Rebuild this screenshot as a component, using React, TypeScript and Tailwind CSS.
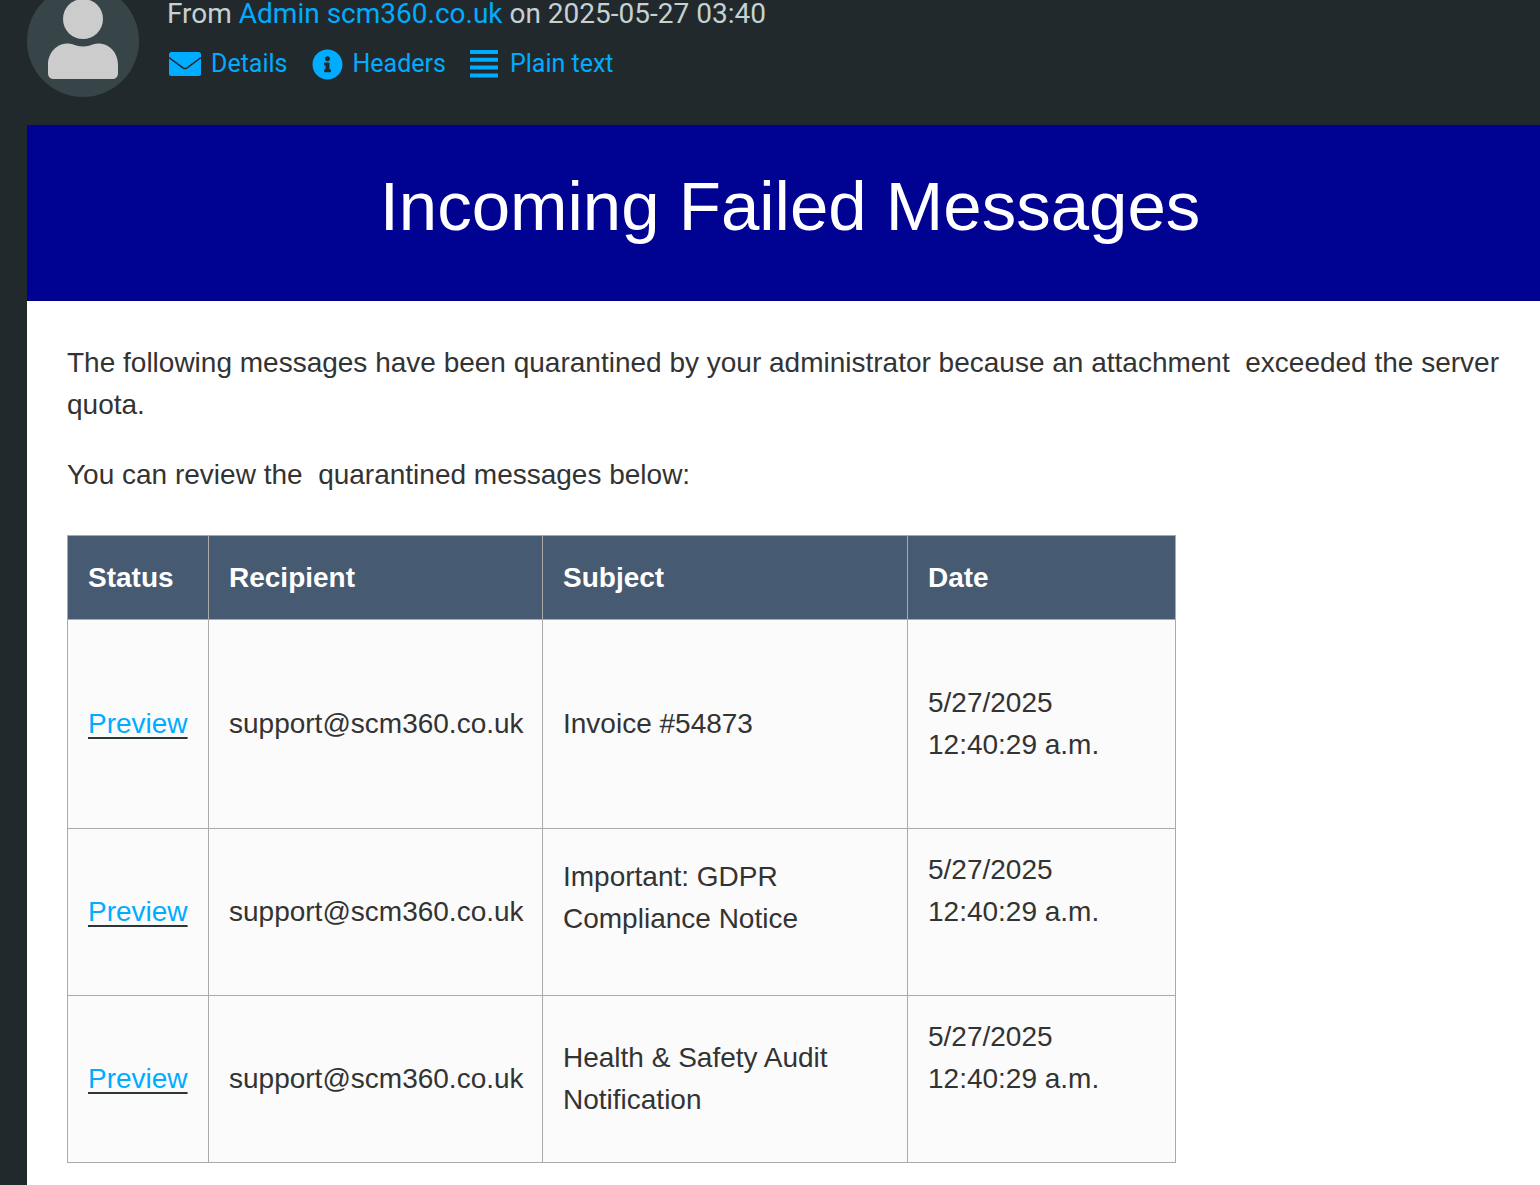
import React from "react";
import { FaInfoCircle } from "react-icons/fa";

interface QuarantinedMessage {
  recipient: string;
  subject: string;
  date: string;
  time: string;
  rowClass: string;
  subjectClass?: string;
  dateClass?: string;
}

const messages: QuarantinedMessage[] = [
  {
    recipient: "support@scm360.co.uk",
    subject: "Invoice #54873",
    date: "5/27/2025",
    time: "12:40:29 a.m.",
    rowClass: "h-[209px]",
  },
  {
    recipient: "support@scm360.co.uk",
    subject: "Important: GDPR Compliance Notice",
    date: "5/27/2025",
    time: "12:40:29 a.m.",
    rowClass: "h-[167px]",
    subjectClass: "mb-7",
    dateClass: "mb-[42px]",
  },
  {
    recipient: "support@scm360.co.uk",
    subject: "Health & Safety Audit Notification",
    date: "5/27/2025",
    time: "12:40:29 a.m.",
    rowClass: "h-[167px]",
    dateClass: "mb-[42px]",
  },
];

const UserIcon = () => (
  <svg viewBox="0 0 70 80" className="w-[70px] h-20" fill="currentColor" aria-hidden="true">
    <circle cx="35" cy="20" r="20" />
    <path d="M0 74.500V66C0 53 9 44.500 20 44.500c6 0 7 3 15 3s9-3 15-3C61 44.500 70 53 70 66v8.500a5.500 5.500 0 0 1-5.500 5.500h-59A5.500 5.500 0 0 1 0 74.500z" />
  </svg>
);

const EnvelopeIcon = () => (
  <svg viewBox="0 0 32 24" className="w-8 h-6" fill="currentColor" aria-hidden="true">
    <rect width="32" height="24" rx="2.500" />
    <path
      d="M0 5.500l14 10.300q2 1.400 4 0L32 5.500"
      fill="none"
      stroke="#21292c"
      strokeWidth="1.500"
    />
  </svg>
);

const LinesIcon = () => (
  <svg viewBox="0 0 28 28" className="w-7 h-7" fill="currentColor" aria-hidden="true">
    <rect width="28" height="4" rx="0.500" />
    <rect y="7.800" width="28" height="4" rx="0.500" />
    <rect y="15.600" width="28" height="4" rx="0.500" />
    <rect y="23.400" width="28" height="4" rx="0.500" />
  </svg>
);

const MessageHeader: React.FC = () => (
  <header className="flex items-start gap-7 h-[125px] pl-[27px] font-[Roboto,sans-serif]">
    <div className="size-28 -mt-[15px] pb-1 shrink-0 rounded-full bg-[#374549] text-[#cccccc] flex items-center justify-center">
      <UserIcon />
    </div>
    <div>
      <p className="text-[28px] leading-7 text-[#c5d1d3]">
        From{" "}
        <a href="#sender" className="text-[#00acff]">
          Admin scm360.co.uk
        </a>{" "}
        on 2025-05-27 03:40
      </p>
      <nav className="mt-4 pl-0.5 flex items-center gap-6 text-[25px] leading-[40px] text-[#00acff]">
        <a href="#details" className="flex items-center gap-2.5">
          <EnvelopeIcon />
          Details
        </a>
        <a href="#headers" className="flex items-center gap-2.5">
          <FaInfoCircle className="size-[31px]" />
          Headers
        </a>
        <a href="#plain" className="flex items-center gap-3">
          <LinesIcon />
          Plain text
        </a>
      </nav>
    </div>
  </header>
);

const MessageTable: React.FC = () => (
  <table className="table-fixed w-[1108px] mt-[39px] border-collapse text-left">
    <colgroup>
      <col className="w-[141px]" />
      <col className="w-[334px]" />
      <col className="w-[365px]" />
      <col className="w-[268px]" />
    </colgroup>
    <thead>
      <tr className="h-[84px] bg-[#465a71] text-white">
        {["Status", "Recipient", "Subject", "Date"].map((label) => (
          <th key={label} scope="col" className="border border-[#aaaaaa] px-5 font-bold">
            {label}
          </th>
        ))}
      </tr>
    </thead>
    <tbody>
      {messages.map((message, index) => (
        <tr key={index} className={`${message.rowClass} bg-[#fbfbfb]`}>
          <td className="border border-[#aaaaaa] px-5">
            <a
              href="#preview"
              className="text-[#00acff] underline decoration-[#2c363a] decoration-2 underline-offset-4"
            >
              Preview
            </a>
          </td>
          <td className="border border-[#aaaaaa] px-5">{message.recipient}</td>
          <td className="border border-[#aaaaaa] px-5">
            <p className={message.subjectClass}>{message.subject}</p>
          </td>
          <td className="border border-[#aaaaaa] px-5">
            <p className={message.dateClass}>
              {message.date}
              <br />
              {message.time}
            </p>
          </td>
        </tr>
      ))}
    </tbody>
  </table>
);

export default function App() {
  return (
    <div className="min-h-screen flex flex-col bg-[#21292c]">
      <MessageHeader />
      <main className="grow ml-[27px] bg-white text-[28px] leading-[42px] text-[#333333] font-['Liberation_Sans',Arial,sans-serif]">
        <div className="h-44 pl-[13px] pb-3 flex items-center justify-center bg-[#000292]">
          <h1 className="text-[69px] leading-[80px] text-white">Incoming Failed Messages</h1>
        </div>
        <div className="pl-10 pr-7 pt-[41px] pb-5">
          <p>
            The following messages have been quarantined by your administrator because an
            attachment&nbsp; exceeded the server quota.
          </p>
          <p className="mt-7">You can review the&nbsp; quarantined messages below:</p>
          <MessageTable />
        </div>
      </main>
    </div>
  );
}
